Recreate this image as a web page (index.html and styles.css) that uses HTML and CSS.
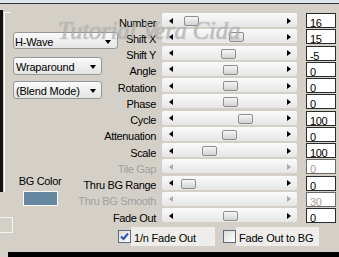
FILE: index.html
```html
<!DOCTYPE html>
<html lang="en">
<head>
    <meta charset="UTF-8">
    <title>Wave Settings</title>
    <link rel="stylesheet" href="styles.css">
</head>
<body>
    <div class="titlebar"></div>

    <div class="page">
        <div class="side">
            <div class="select select-wide"><span>H-Wave</span><i class="caret"></i></div>
            <div class="select select-mid"><span>Wraparound</span><i class="caret"></i></div>
            <div class="select select-low"><span>(Blend Mode)</span><i class="caret"></i></div>
            <div class="bgcolor">
                <span>BG Color</span>
                <div class="swatch"></div>
            </div>
            <div class="stub"></div>
        </div>

        <div class="params">
            <div class="label"><span>Number</span></div>
            <div class="slider"><i class="arr-l"></i><i class="thumb" style="left:22px"></i><i class="arr-r"></i></div>
            <div class="num">16</div>

            <div class="label"><span>Shift X</span></div>
            <div class="slider"><i class="arr-l"></i><i class="thumb" style="left:67px"></i><i class="arr-r"></i></div>
            <div class="num">15</div>

            <div class="label"><span>Shift Y</span></div>
            <div class="slider"><i class="arr-l"></i><i class="thumb" style="left:59px"></i><i class="arr-r"></i></div>
            <div class="num">-5</div>

            <div class="label"><span>Angle</span></div>
            <div class="slider"><i class="arr-l"></i><i class="thumb" style="left:61px"></i><i class="arr-r"></i></div>
            <div class="num">0</div>

            <div class="label"><span>Rotation</span></div>
            <div class="slider"><i class="arr-l"></i><i class="thumb" style="left:61px"></i><i class="arr-r"></i></div>
            <div class="num">0</div>

            <div class="label"><span>Phase</span></div>
            <div class="slider"><i class="arr-l"></i><i class="thumb" style="left:61px"></i><i class="arr-r"></i></div>
            <div class="num">0</div>

            <div class="label"><span>Cycle</span></div>
            <div class="slider"><i class="arr-l"></i><i class="thumb" style="left:76px"></i><i class="arr-r"></i></div>
            <div class="num">100</div>

            <div class="label"><span>Attenuation</span></div>
            <div class="slider"><i class="arr-l"></i><i class="thumb" style="left:60px"></i><i class="arr-r"></i></div>
            <div class="num">0</div>

            <div class="label"><span>Scale</span></div>
            <div class="slider"><i class="arr-l"></i><i class="thumb" style="left:40px"></i><i class="arr-r"></i></div>
            <div class="num">100</div>

            <div class="label off"><span>Tile Gap</span></div>
            <div class="slider off"><i class="arr-l"></i><i class="arr-r"></i></div>
            <div class="num off">0</div>

            <div class="label"><span>Thru BG Range</span></div>
            <div class="slider"><i class="arr-l"></i><i class="thumb" style="left:19px"></i><i class="arr-r"></i></div>
            <div class="num">0</div>

            <div class="label off"><span>Thru BG Smooth</span></div>
            <div class="slider off"><i class="arr-l"></i><i class="arr-r"></i></div>
            <div class="num off">30</div>

            <div class="label"><span>Fade Out</span></div>
            <div class="slider"><i class="arr-l"></i><i class="thumb" style="left:61px"></i><i class="arr-r"></i></div>
            <div class="num">0</div>
        </div>

        <div class="checks">
            <div class="check">
                <div class="box">
                    <svg width="11" height="11" viewBox="0 0 11 11"><path d="M2 5.5 L4.5 8 L9 2.5" fill="none" stroke="#2a52be" stroke-width="2"/></svg>
                </div>
                <span class="check-text">1/n Fade Out</span>
            </div>
            <div class="check check-second">
                <div class="box"></div>
                <span class="check-text">Fade Out to BG</span>
            </div>
        </div>
    </div>

    <div class="watermark">Tutorial Vera Cida</div>

    <div class="bottombar"></div>
</body>
</html>
```

FILE: styles.css
```css
body {
    margin: 0;
    width: 339px;
    height: 257px;
    overflow: hidden;
    position: relative;
    display: flex;
    flex-direction: column;
    background-color: #d4d0c8;
    font-family: "Liberation Sans", Arial, sans-serif;
    font-size: 11px;
    color: #000;
}
.titlebar {
    height: 3px;
    background-color: #dfe5ec;
    border-bottom: 1px solid #2e3846;
}
.page {
    display: grid;
    grid-template-columns: 117px 219px;
}
.side {
    grid-row: 1 / 3;
    display: flex;
    flex-direction: column;
    align-items: flex-start;
    background:
        linear-gradient(#111, #111) 0 6px / 3px 182px no-repeat,
        linear-gradient(#fff, #fff) 4px 8px / 1px 180px no-repeat,
        linear-gradient(#fff, #fff) 4px 8px / 6px 1px no-repeat;
}
.select {
    box-sizing: border-box;
    display: flex;
    align-items: center;
    justify-content: space-between;
    margin-left: 13px;
    width: 89px;
    height: 18px;
    padding: 1.5px 5px 0 2px;
    border: 1px solid #979797;
    border-radius: 3px;
    background: linear-gradient(#fbfbfb, #e4e4e4);
    letter-spacing: -0.2px;
}
.select span {
    line-height: 12px;
}
.select-wide {
    width: 105px;
    height: 17px;
    margin-top: 28px;
    padding-top: 3px;
    padding-right: 6px;
    padding-left: 1px;
}
.select-mid {
    margin-top: 8px;
}
.select-low {
    margin-top: 6px;
}
.caret {
    width: 0;
    height: 0;
    border-top: 4px solid #000;
    border-left: 3.5px solid transparent;
    border-right: 3.5px solid transparent;
}
.bgcolor {
    width: 80px;
    margin-top: 76px;
    display: flex;
    flex-direction: column;
    align-items: center;
}
.bgcolor span {
    line-height: 13px;
    letter-spacing: -0.35px;
}
.swatch {
    box-sizing: border-box;
    width: 35px;
    height: 15px;
    margin-top: 3px;
    background-color: #6787a1;
    border: 1px solid #fafafa;
}
.stub {
    box-sizing: border-box;
    width: 13px;
    height: 16px;
    margin-top: 11px;
    border: 1px solid #f4f4f4;
    border-left: none;
}
.params {
    display: grid;
    grid-template-columns: 45px 144px 30px;
    grid-auto-rows: 16.25px;
    padding-top: 8.5px;
}
.label {
    display: flex;
    justify-content: flex-end;
    padding: 2px 6px 0 0;
    line-height: 16.25px;
    white-space: nowrap;
    letter-spacing: -0.35px;
}
.label.off {
    color: #a0a0a0;
}
.slider {
    position: relative;
    box-sizing: border-box;
    width: 135px;
    height: 14px;
    margin-top: 0.5px;
    padding: 1px 6px 0 7px;
    display: flex;
    align-items: center;
    justify-content: space-between;
    border-radius: 2px;
    background: linear-gradient(#fafafa, #e6e6e6);
}
.arr-l {
    width: 0;
    height: 0;
    border-top: 3.5px solid transparent;
    border-bottom: 3.5px solid transparent;
    border-right: 4px solid #000;
}
.arr-r {
    width: 0;
    height: 0;
    border-top: 3.5px solid transparent;
    border-bottom: 3.5px solid transparent;
    border-left: 4px solid #000;
}
.slider.off .arr-l {
    border-right-color: #a8a8a8;
}
.slider.off .arr-r {
    border-left-color: #a8a8a8;
}
.thumb {
    position: absolute;
    top: 3px;
    box-sizing: border-box;
    width: 15px;
    height: 10px;
    border: 1px solid #8d8d8d;
    border-radius: 2px;
    background: linear-gradient(#f7f7f7, #d2d2d2);
}
.num {
    box-sizing: border-box;
    height: 15px;
    margin-top: 0.5px;
    padding: 3px 0 0 3px;
    border: 1px solid #2b2b2b;
    background-color: #fff;
    line-height: 12px;
    letter-spacing: -0.4px;
}
.num.off {
    color: #a0a0a0;
    border-color: #6a6a6a;
}
.checks {
    grid-column: 2;
    display: flex;
    align-items: center;
    padding-top: 3px;
}
.check {
    display: flex;
    align-items: center;
    height: 19px;
}
.check-second {
    margin-left: 7px;
}
.box {
    box-sizing: border-box;
    width: 13px;
    height: 13px;
    margin-left: 1px;
    border: 1px solid #5a6d80;
    background: linear-gradient(135deg, #dcdcd6, #fff);
}
.box svg {
    display: block;
}
.check-text {
    box-sizing: border-box;
    width: 84px;
    height: 19px;
    padding: 4px 0 0 3px;
    line-height: 15px;
    background-color: #eeede9;
    letter-spacing: -0.2px;
    white-space: nowrap;
}
.check-second .check-text {
    width: 83px;
}
.watermark {
    position: absolute;
    left: 58px;
    top: 17px;
    font-family: "Liberation Serif", serif;
    font-style: italic;
    font-size: 25px;
    letter-spacing: -0.3px;
    color: rgba(235, 235, 235, 0.5);
    text-shadow: 0 0 1px rgba(90, 90, 90, 0.7);
    pointer-events: none;
    white-space: nowrap;
}
.bottombar {
    margin: auto 0 0 8px;
    height: 5px;
    background-color: #000;
}
```
